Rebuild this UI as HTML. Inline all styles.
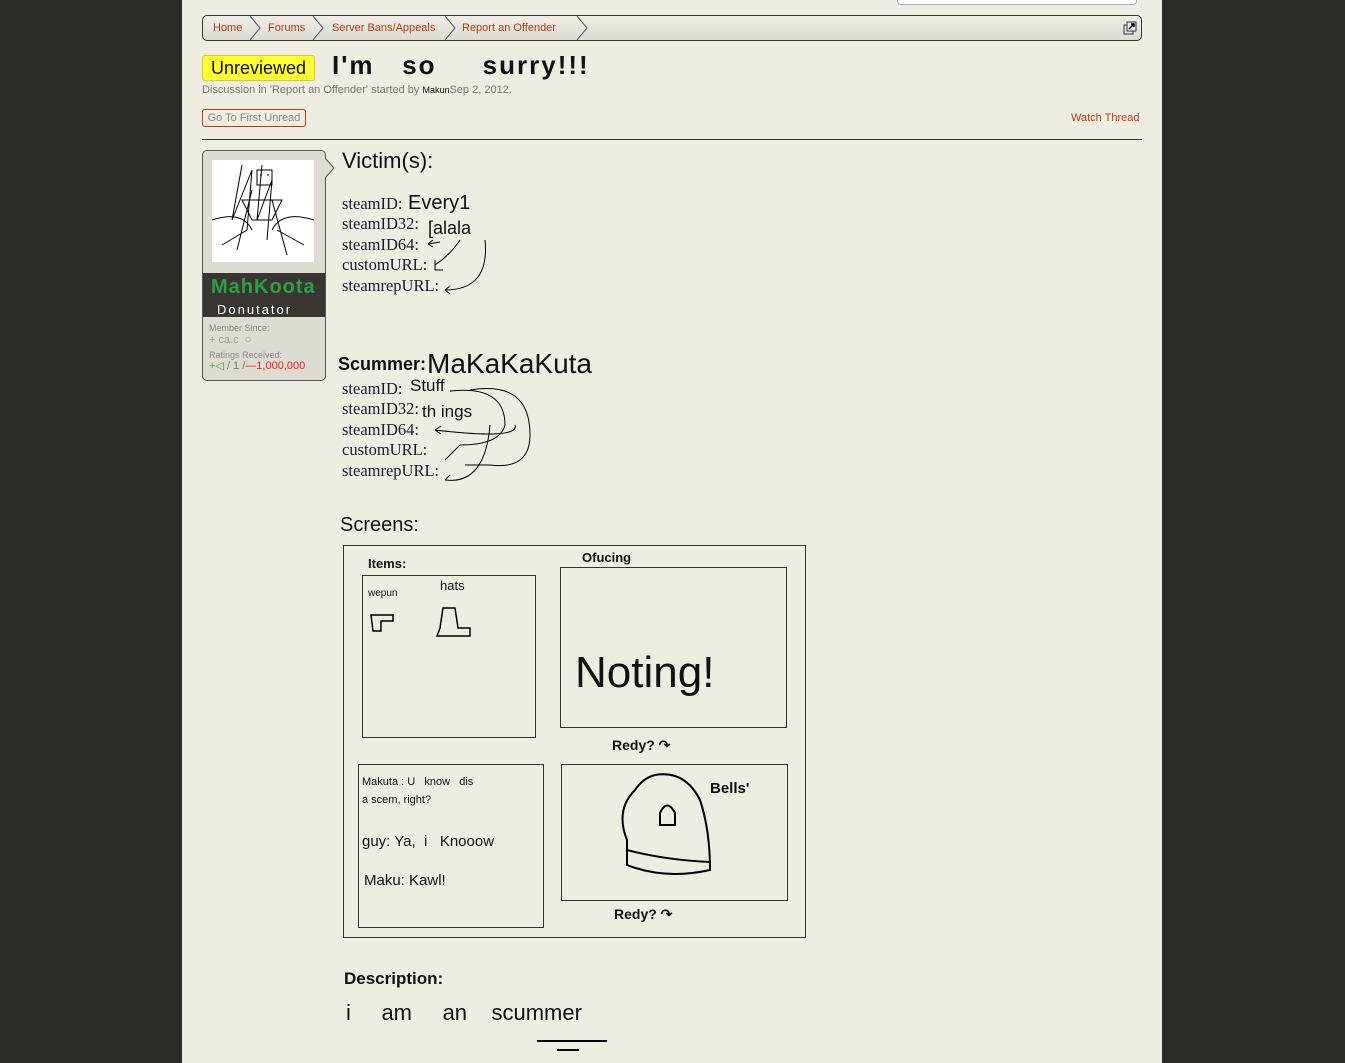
<!DOCTYPE html>
<html><head><meta charset="utf-8"><style>
*{margin:0;padding:0;box-sizing:border-box}
body{width:1345px;height:1063px;background:#2e2b26;position:relative;overflow:hidden;font-family:"Liberation Sans",sans-serif}
#pg{position:absolute;left:182px;top:0;width:980px;height:1063px;background:#efece2}
.a{position:absolute}
.crumb{left:202px;top:15px;width:940px;height:26px;border:1px solid #3a3632;border-radius:5px;background:linear-gradient(#efede6,#dedbd2)}
.crumb span{position:absolute;top:6px;font-size:11px;color:#b33a1a}
.sep{position:absolute;top:0;width:14px;height:24px}
.hw{position:absolute;color:#111;font-family:"Liberation Sans",sans-serif;white-space:nowrap}
.sf{position:absolute;font-family:"Liberation Serif",serif;font-size:16.5px;color:#1a1c2a;white-space:nowrap}
.bx{position:absolute;border:1px solid #333}
</style></head><body>
<div id="pg"></div>
<div class="a" style="left:897px;top:0;width:240px;height:5px;border:1px solid #aaa;border-top:none;border-radius:0 0 4px 4px;background:#fff"></div>
<div class="a crumb">
<span style="left:10px">Home</span>
<svg class="sep" style="left:45px" viewBox="0 0 14 24"><path d="M2 0 L12 12 L2 24" fill="none" stroke="#555"/></svg>
<span style="left:65px">Forums</span>
<svg class="sep" style="left:108px" viewBox="0 0 14 24"><path d="M2 0 L12 12 L2 24" fill="none" stroke="#555"/></svg>
<span style="left:129px">Server Bans/Appeals</span>
<svg class="sep" style="left:240px" viewBox="0 0 14 24"><path d="M2 0 L12 12 L2 24" fill="none" stroke="#555"/></svg>
<span style="left:259px">Report an Offender</span>
<svg class="sep" style="left:372px" viewBox="0 0 14 24"><path d="M2 0 L12 12 L2 24" fill="none" stroke="#555"/></svg>
<svg class="a" style="left:920px;top:5px" width="14" height="14" viewBox="0 0 14 14"><rect x="1" y="4" width="9" height="9" fill="none" stroke="#333"/><rect x="4" y="1" width="9" height="9" fill="#eee" stroke="#333"/><path d="M6 8 L11 3 M8 3 H11 V6" stroke="#000" fill="none" stroke-width="1.5"/></svg>
</div>
<div class="a" style="left:202px;top:55px;width:113px;height:26px;background:#ffff33;border:1px solid #cc3;border-radius:3px;font-size:18px;line-height:24px;text-align:center;color:#111">Unreviewed</div>
<div class="hw" style="left:332px;top:50px;font-size:26px;font-weight:bold;letter-spacing:2px">I'm &nbsp; so &nbsp;&nbsp;&nbsp; surry!!!</div>
<div class="a" style="left:202px;top:84px;font-size:11px;color:#777">Discussion in 'Report an Offender' started by <span style="color:#111;font-size:9px">Makun</span>Sep 2, 2012.</div>
<div class="a" style="left:202px;top:109px;width:104px;height:18px;border:1px solid #c0391a;border-radius:3px;font-size:11px;color:#888;line-height:16px;text-align:center">Go To First Unread</div>
<div class="a" style="left:1071px;top:112px;font-size:11px;color:#c0391a">Watch Thread</div>
<div class="a" style="left:202px;top:139px;width:940px;height:1px;background:#333"></div>
<div class="a" style="left:202px;top:150px;width:124px;height:231px;border:1px solid #555;border-radius:5px;background:#dedbd2;overflow:hidden">
<div class="a" style="left:0;top:122px;width:124px;height:44px;background:#3a3530"></div>
<div class="a" style="left:8px;top:125px;font-size:20px;font-weight:bold;color:#2aa04a;letter-spacing:1px">MahKoota</div>
<div class="a" style="left:14px;top:151px;font-size:13px;color:#fff;letter-spacing:2px">Donutator</div>
<div class="a" style="left:6px;top:172px;font-size:9px;color:#888">Member Since:</div>
<div class="a" style="left:6px;top:183px;font-size:11px;color:#999">+ ca.c &nbsp;&#9675;</div>
<div class="a" style="left:6px;top:199px;font-size:9px;color:#888">Ratings Received:</div>
<div class="a" style="left:6px;top:208px;font-size:11px;color:#777"><span style="color:#4a4">+&#9665;</span> / 1 /<span style="color:#e22">&mdash;1,000,000</span></div>
</div>
<svg class="a" style="left:325px;top:158px" width="10" height="20"><path d="M0 0 L9 10 L0 20" fill="#dedbd2" stroke="#555"/></svg>
<svg class="a" style="left:212px;top:160px;background:#fff" width="102" height="102" viewBox="0 0 102 102">
<g stroke="#000" fill="none" stroke-width="1"><path d="M30 5 L20 60 L40 10 L35 70 M50 5 L45 60 L60 20 L55 80 M40 30 L25 90 M60 40 L75 95 M0 60 Q30 50 40 70 M102 60 Q70 50 60 70 M10 85 L35 70 M92 85 L65 70 M45 10 h15 v15 h-15z M48 15 h2 M55 15 h2 M30 40 L70 40 L60 60 L40 60z"/></g></svg>
<div class="hw" style="left:342px;top:148px;font-size:22px">Victim(s):</div>
<div class="sf" style="left:342px;top:194px">steamID:</div><div class="hw" style="left:408px;top:192px;font-size:20px;font-weight:100">Every1</div>
<div class="sf" style="left:342px;top:214px">steamID32:</div><div class="hw" style="left:428px;top:218px;font-size:18px">[alala</div>
<div class="sf" style="left:342px;top:235px">steamID64:</div>
<div class="sf" style="left:342px;top:255px">customURL:</div>
<div class="sf" style="left:342px;top:276px">steamrepURL:</div>
<svg class="a" style="left:420px;top:230px" width="80" height="70"><g stroke="#000" fill="none"><path d="M20 12 L8 14 M8 14 l5-4 M8 14 l5 3 M40 10 Q30 25 15 35 M15 30 v10 h8 M65 10 Q70 60 25 60 M25 60 l5-4 M25 60 l5 4"/></g></svg>
<div class="hw" style="left:338px;top:354px;font-size:18px;font-weight:bold">Scummer:</div><div class="hw" style="left:427px;top:348px;font-size:28px;font-weight:100">MaKaKaKuta</div>
<div class="sf" style="left:342px;top:379px">steamID:</div><div class="hw" style="left:410px;top:376px;font-size:17px">Stuff</div>
<div class="sf" style="left:342px;top:399px">steamID32:</div><div class="hw" style="left:422px;top:402px;font-size:17px">th ings</div>
<div class="sf" style="left:342px;top:420px">steamID64:</div>
<div class="sf" style="left:342px;top:440px">customURL:</div>
<div class="sf" style="left:342px;top:461px">steamrepURL:</div>
<svg class="a" style="left:430px;top:385px" width="110" height="100"><g stroke="#000" fill="none"><path d="M20 6 Q75 0 75 40 Q70 60 30 60 L15 75 M40 5 Q100 -5 100 50 Q100 85 60 80 L35 80 M85 40 Q90 55 5 45 M5 45 l6-4 M5 45 l6 4 M60 40 Q55 100 15 95 M15 95 l5-5"/></g></svg>
<div class="hw" style="left:340px;top:514px;font-size:20px">Screens:</div>
<div class="bx" style="left:343px;top:545px;width:463px;height:393px"></div>
<div class="hw" style="left:368px;top:556px;font-size:13px;font-weight:bold">Items:</div>
<div class="bx" style="left:362px;top:575px;width:174px;height:163px"></div>
<div class="hw" style="left:368px;top:588px;font-size:10px">wepun</div>
<div class="hw" style="left:440px;top:578px;font-size:13px">hats</div>
<svg class="a" style="left:368px;top:605px" width="130" height="35"><g stroke="#000" fill="none" stroke-width="1.5"><path d="M3 10 h22 v6 h-12 v10 h-8z M75 3 h12 l3 20 h12 v8 h-33 l3-8z"/></g></svg>
<div class="hw" style="left:582px;top:550px;font-size:13px;font-weight:bold">Ofucing</div>
<div class="bx" style="left:560px;top:567px;width:227px;height:161px"></div>
<div class="hw" style="left:575px;top:648px;font-size:44px;font-weight:100">Noting!</div>
<div class="hw" style="left:612px;top:737px;font-size:14px;font-weight:bold">Redy? &#8631;</div>
<div class="bx" style="left:358px;top:764px;width:186px;height:164px"></div>
<div class="hw" style="left:362px;top:776px;font-size:11px">Makuta : U &nbsp; know &nbsp; dis</div>
<div class="hw" style="left:362px;top:794px;font-size:11px">a scem, right?</div>
<div class="hw" style="left:362px;top:833px;font-size:15px">guy: Ya, &nbsp;i &nbsp; Knooow</div>
<div class="hw" style="left:364px;top:872px;font-size:15px">Maku: Kawl!</div>
<div class="bx" style="left:561px;top:764px;width:227px;height:137px"></div>
<svg class="a" style="left:615px;top:770px" width="150" height="110"><g stroke="#000" fill="none" stroke-width="2"><path d="M40 5 Q70 0 85 30 Q95 60 95 100 Q50 110 12 95 L12 70 Q0 40 20 20 Q28 8 40 5z M12 80 Q50 90 95 92 M45 55 v-12 Q52 28 60 43 v12z"/></g></svg>
<div class="hw" style="left:710px;top:780px;font-size:15px;font-weight:bold">Bells'</div>
<div class="hw" style="left:614px;top:906px;font-size:14px;font-weight:bold">Redy? &#8631;</div>
<div class="hw" style="left:344px;top:969px;font-size:17px;font-weight:bold">Description:</div>
<div class="hw" style="left:346px;top:1000px;font-size:22px">i &nbsp;&nbsp;&nbsp; am &nbsp;&nbsp;&nbsp; an &nbsp;&nbsp; scummer</div>
<div class="a" style="left:537px;top:1040px;width:70px;height:2px;background:#000"></div>
<div class="a" style="left:557px;top:1049px;width:22px;height:2px;background:#000"></div>
</body></html>
